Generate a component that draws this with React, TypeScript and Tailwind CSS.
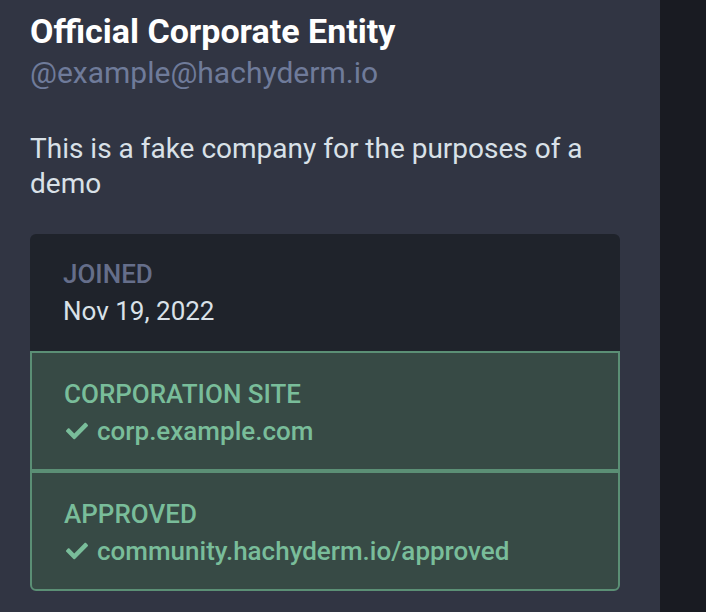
import { FaCheck } from 'react-icons/fa';

const fields = [
    { name: 'CORPORATION SITE', value: 'corp.example.com' },
    { name: 'APPROVED', value: 'community.hachyderm.io/approved' },
];

const App = () => {
    return (
        <div
            className="flex w-[706px] h-[612px] overflow-hidden bg-[#191b22]"
            style={{ fontFamily: 'Roboto, "Noto Sans", sans-serif' }}
        >
            <div className="w-[660px] h-full bg-[#313543] pl-[30px] pr-[40px] pt-[10px]">
                <h1 className="text-[34px] leading-[42px] font-bold text-white">
                    Official Corporate Entity
                </h1>
                <div className="text-[30px] leading-[42px] text-[#6f7b9a]">
                    @example@hachyderm.io
                </div>

                <p className="mt-[37px] text-[28px] leading-[35px] text-[#d9e1e8]">
                    This is a fake company for the purposes of a demo
                </p>

                {/* profile fields */}
                <div className="mt-[33px]">
                    <div className="bg-[#1f232b] rounded-t-[6px] px-[33px] pt-[25px] pb-[22px]">
                        <div className="text-[26px] leading-[30px] font-medium text-[#656e8a]">
                            JOINED
                        </div>
                        <div className="mt-[4px] text-[26px] leading-[36px] text-[#d9e1e8]">
                            Nov 19, 2022
                        </div>
                    </div>

                    {fields.map((field, i) => (
                        <div
                            key={field.name}
                            className={
                                'bg-[#374a45] border-2 border-[#5b8f75] px-[32px] pt-[26px] pb-[20px] ' +
                                (i === fields.length - 1 ? 'rounded-b-[6px]' : '')
                            }
                        >
                            <div className="text-[26px] leading-[30px] font-medium text-[#79bd9a]">
                                {field.name}
                            </div>
                            <div className="mt-[4px] flex items-center text-[26px] leading-[36px] font-medium text-[#79bd9a]">
                                <FaCheck className="w-[22px] h-[22px] ml-[2px] mr-[9px] shrink-0" />
                                <span>{field.value}</span>
                            </div>
                        </div>
                    ))}
                </div>
            </div>
            <div className="flex-1" />
        </div>
    );
};

export default App;
